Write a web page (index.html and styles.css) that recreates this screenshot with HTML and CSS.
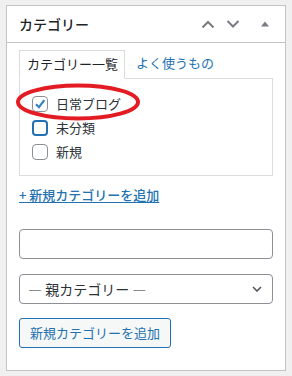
FILE: index.html
```html
<!DOCTYPE html>
<html lang="ja">
<head>
<meta charset="utf-8">
<link rel="stylesheet" href="styles.css">
</head>
<body>
<div class="panel">
  <div class="header">
    <h2 class="title">カテゴリー</h2>
    <div class="controls">
      <svg class="ctl" width="14" height="10" viewBox="0 0 14 10"><path d="M1.5 8.5 L7 3 L12.5 8.5" fill="none" stroke="#787c82" stroke-width="2"/></svg>
      <svg class="ctl" width="14" height="10" viewBox="0 0 14 10"><path d="M1.5 2 L7 7.5 L12.5 2" fill="none" stroke="#787c82" stroke-width="2"/></svg>
      <svg class="ctl tri" width="10" height="8" viewBox="0 0 10 8"><path d="M1 6.5 L5 1.5 L9 6.5 Z" fill="#787c82"/></svg>
    </div>
  </div>
  <div class="inside">
    <div class="tabs">
      <span class="tab active">カテゴリー一覧</span>
      <span class="tab">よく使うもの</span>
    </div>
    <div class="tabpanel">
      <label class="row"><span class="cb checked"><svg width="14" height="14" viewBox="0 0 14 14"><path d="M3 7.2 L6 10.2 L11.3 3.2" fill="none" stroke="#3582c4" stroke-width="2.2"/></svg></span>日常ブログ</label>
      <label class="row"><span class="cb focus"></span>未分類</label>
      <label class="row"><span class="cb"></span>新規</label>
    </div>
    <a class="addlink" href="#">+&nbsp;新規カテゴリーを追加</a>
    <div class="field"></div>
    <div class="field select">— 親カテゴリー —<svg width="10" height="6" viewBox="0 0 10 6"><path d="M1 1 L5 5 L9 1" fill="none" stroke="#50575e" stroke-width="1.6"/></svg></div>
    <span class="button">新規カテゴリーを追加</span>
  </div>
  <svg class="ring" width="126" height="40" viewBox="0 0 126 40"><ellipse cx="63" cy="20" rx="60" ry="16.5" fill="none" stroke="#e31b23" stroke-width="4"/></svg>
</div>
</body>
</html>
```
FILE: styles.css
```css
* { box-sizing: border-box; }
html, body { margin: 0; }
body {
  background: #f0f0f1;
  padding: 5px 6px;
  font-family: "Noto Sans CJK JP", "Noto Sans", sans-serif;
  color: #1d2327;
  font-size: 13px;
}
.panel {
  position: relative;
  width: 280px;
  height: 366px;
  background: #fff;
  border: 1px solid #c3c4c7;
}
.header {
  height: 37px;
  border-bottom: 1px solid #c3c4c7;
  display: flex;
  align-items: center;
  justify-content: space-between;
  padding: 0 12px 0 12px;
}
.title {
  margin: 0;
  font-size: 14px;
  font-weight: 500;
  line-height: 20px;
  color: #1d2327;
}
.controls {
  display: flex;
  align-items: center;
  gap: 11px;
  margin-right: 3px;
}
.ctl { display: block; }
.tri { margin-left: 9px; }
.inside {
  padding: 8px 12px 0 12px;
  display: flex;
  flex-direction: column;
  align-items: flex-start;
}
.tabs {
  display: flex;
  align-items: flex-end;
  height: 27px;
}
.tab {
  display: block;
  padding: 3px 6px 4px 7px;
  line-height: 20px;
  font-size: 13px;
  color: #2271b1;
  border: 1px solid transparent;
}
.tab.active {
  color: #1d2327;
  border-color: #dcdcde;
  border-bottom-color: #fff;
  background: #fff;
  position: relative;
  z-index: 1;
  margin-bottom: -1px;
  padding-bottom: 4px;
}
.tab + .tab { padding-left: 10px; }
.tabpanel {
  width: 254px;
  height: 98px;
  border: 1px solid #dcdcde;
  padding: 17px 12px 0 12px;
  display: flex;
  flex-direction: column;
  gap: 8px;
}
.row {
  display: flex;
  align-items: center;
  gap: 8px;
  height: 16px;
  line-height: 16px;
  font-size: 13px;
  color: #2c3338;
}
.cb {
  width: 16px;
  height: 16px;
  border: 1px solid #8c8f94;
  border-radius: 4px;
  background: #fff;
  display: flex;
  align-items: center;
  justify-content: center;
  flex: none;
}
.cb.focus {
  border: 2px solid #2271b1;
}
.addlink {
  margin-top: 9px;
  line-height: 20px;
  font-size: 13px;
  font-weight: 500;
  color: #2271b1;
  text-decoration: underline;
  text-underline-offset: 2px;
}
.field {
  margin-top: 24px;
  width: 254px;
  height: 30px;
  border: 1px solid #8c8f94;
  border-radius: 4px;
  background: #fff;
}
.select {
  margin-top: 15px;
  display: flex;
  align-items: center;
  justify-content: space-between;
  padding: 0 10px 0 8px;
  font-size: 14px;
  color: #2c3338;
}
.select svg { display: block; }
.button {
  margin-top: 14px;
  height: 30px;
  padding: 0 10px;
  border: 1px solid #2271b1;
  border-radius: 3px;
  background: #f6f7f7;
  color: #2271b1;
  font-size: 13px;
  line-height: 28px;
  white-space: nowrap;
}
.ring {
  position: absolute;
  left: 8px;
  top: 76px;
}
```
